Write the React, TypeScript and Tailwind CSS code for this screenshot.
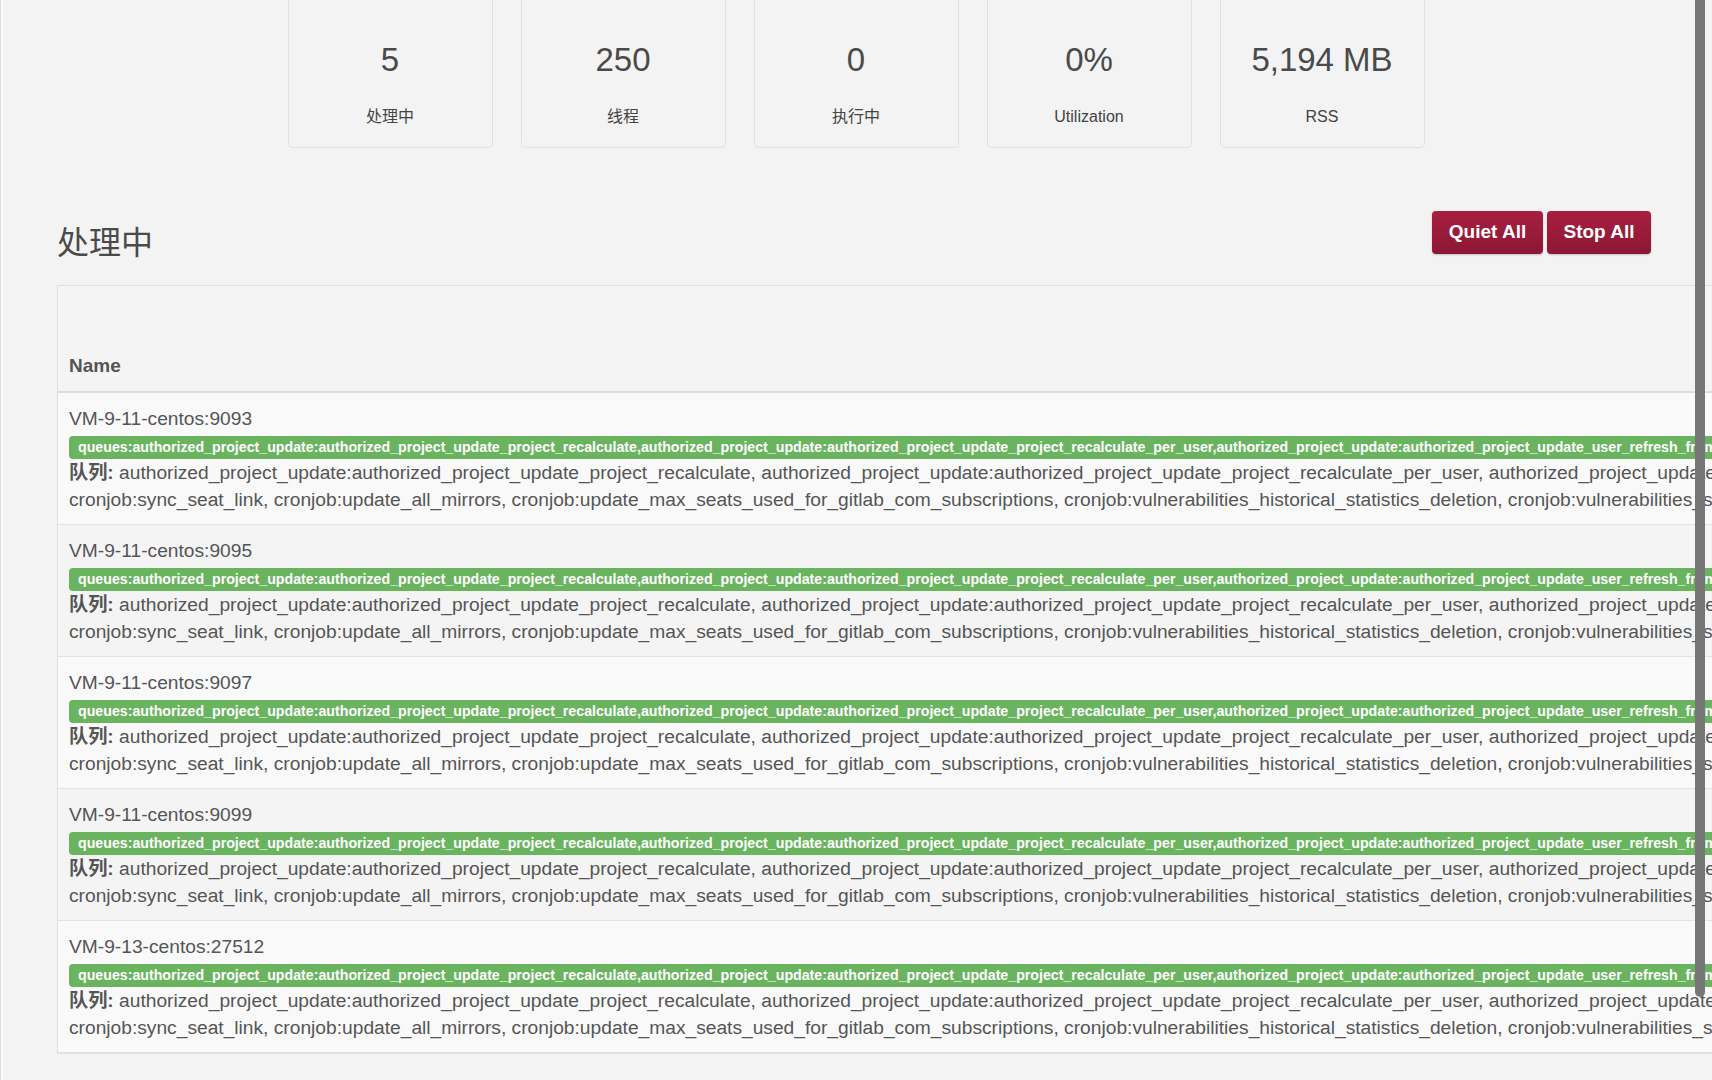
const stats = [
  { value: "5", label: "处理中" },
  { value: "250", label: "线程" },
  { value: "0", label: "执行中" },
  { value: "0%", label: "Utilization" },
  { value: "5,194 MB", label: "RSS" },
];

const hosts = [
  "VM-9-11-centos:9093",
  "VM-9-11-centos:9095",
  "VM-9-11-centos:9097",
  "VM-9-11-centos:9099",
  "VM-9-13-centos:27512",
];

const queueTag =
  "queues:authorized_project_update:authorized_project_update_project_recalculate,authorized_project_update:authorized_project_update_project_recalculate_per_user,authorized_project_update:authorized_project_update_user_refresh_from_replica,authorized_project_update:authorized_project_update_user_refresh_over_user_range";

const queueLine =
  "authorized_project_update:authorized_project_update_project_recalculate, authorized_project_update:authorized_project_update_project_recalculate_per_user, authorized_project_update:authorized_project_update_user_refresh_from_replica,";

const cronLine =
  "cronjob:sync_seat_link, cronjob:update_all_mirrors, cronjob:update_max_seats_used_for_gitlab_com_subscriptions, cronjob:vulnerabilities_historical_statistics_deletion, cronjob:vulnerabilities_statistics_adjustment, cronjob:x509_issuer_crl_check";

const font = "font-['Liberation_Sans','Noto_Sans_CJK_SC',sans-serif]";

const StatCard = ({ value, label }: { value: string; label: string }) => (
  <div className="flex h-[148px] w-[205px] flex-col items-center rounded-b-[5px] border border-t-0 border-[#e2e2e2] pt-[40px]">
    <div className="text-[33px] leading-[40px] text-[#4a4a4a]">{value}</div>
    <div className="mt-[27px] text-[16px] leading-[20px] text-[#444]">{label}</div>
  </div>
);

const ProcessRow = ({ host, striped }: { host: string; striped: boolean }) => (
  <div
    className={`h-[132px] border-b border-[#e3e3e3] px-[11px] pt-[12px] text-[19.2px] leading-[27px] text-[#555] ${
      striped ? "bg-[#f9f9f9]" : "bg-[#f4f4f4]"
    }`}
  >
    <div className="whitespace-nowrap">{host}</div>
    <div className="mt-[4px] flex h-[23px] items-center overflow-hidden whitespace-nowrap rounded-[4px] bg-[#6ab35f] px-[9px] text-[14.2px] font-bold leading-[23px] text-white">
      {queueTag}
    </div>
    <div className="whitespace-nowrap">
      <span className="font-bold">队列:</span> {queueLine}
    </div>
    <div className="whitespace-nowrap">{cronLine}</div>
  </div>
);

export default function App() {
  return (
    <div
      className={`relative h-[1080px] w-[1712px] overflow-hidden border-l border-[#dcdcdc] bg-[#f3f3f3] ${font}`}
    >
      <div className="flex h-full">
        <div className="w-[2px] shrink-0 bg-[#fafafa]" />
        <div className="flex min-w-0 flex-1 flex-col">
          <div className="flex justify-center gap-[28px] pr-[3px]">
            {stats.map((s) => (
              <StatCard key={s.value + s.label} value={s.value} label={s.label} />
            ))}
          </div>

          <div className="mt-[63px] flex items-start justify-between pl-[54px] pr-[61px]">
            <h3 className="mt-[12px] text-[32px] leading-[40px] text-[#4a4a4a]">处理中</h3>
            <div className="flex gap-[4px]">
              <button className="h-[43px] w-[111px] rounded-[4px] bg-gradient-to-b from-[#a81f40] to-[#8c1734] text-[19px] font-bold text-white shadow-[0_1px_2px_rgba(0,0,0,0.2)]">
                Quiet All
              </button>
              <button className="h-[43px] w-[104px] rounded-[4px] bg-gradient-to-b from-[#a81f40] to-[#8c1734] text-[19px] font-bold text-white shadow-[0_1px_2px_rgba(0,0,0,0.2)]">
                Stop All
              </button>
            </div>
          </div>

          <div className="ml-[54px] mt-[22px] w-[1800px] border border-[#e0e0e0]">
            <div className="flex h-[107px] items-end border-b-2 border-[#dddddd] bg-[#f4f4f4] px-[11px] pb-[12px] text-[19px] font-bold leading-[27px] text-[#555]">
              Name
            </div>
            {hosts.map((h, i) => (
              <ProcessRow key={h} host={h} striped={i % 2 === 0} />
            ))}
          </div>
        </div>
      </div>

      <div className="absolute right-[7px] top-0 h-[997px] w-[10px] rounded-b-[5px] bg-[#767676]" />
    </div>
  );
}
